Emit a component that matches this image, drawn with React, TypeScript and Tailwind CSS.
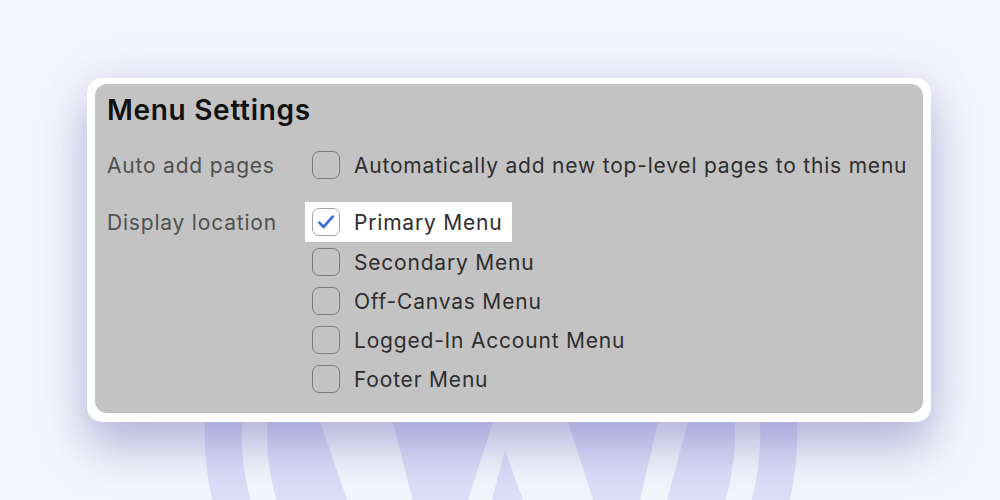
import React from 'react';

const locations = [
  { id: 'primary', label: 'Primary Menu', checked: true },
  { id: 'secondary', label: 'Secondary Menu', checked: false },
  { id: 'off-canvas', label: 'Off-Canvas Menu', checked: false },
  { id: 'logged-in', label: 'Logged-In Account Menu', checked: false },
  { id: 'footer', label: 'Footer Menu', checked: false },
];

function Checkbox({ checked }: { checked?: boolean }) {
  if (checked) {
    return (
      <span className="w-[28px] h-[28px] shrink-0 rounded-[7px] border-[1.5px] border-[#a3a3a3] bg-white flex items-center justify-center">
        <svg viewBox="0 0 24 24" className="w-[20px] h-[20px]" fill="none">
          <path d="M4 12.8l5 5.2L20 5.5" stroke="#3b6fd6" strokeWidth="3.3" strokeLinecap="round" strokeLinejoin="round" />
        </svg>
      </span>
    );
  }
  return <span className="w-[28px] h-[28px] shrink-0 rounded-[7px] border-[1.5px] border-[#7c7c7c]" />;
}

// faint WordPress mark behind the card
function WordPressMark() {
  return (
    <svg viewBox="0 0 1000 500" className="absolute inset-0 w-[1000px] h-[500px]">
      <circle cx="501" cy="434" r="277.75" fill="none" stroke="#dedcf8" strokeWidth="37" />
      <circle cx="501" cy="434" r="234" fill="#dedcf8" />
      <polygon points="305.5,380 382,380 423,540 361,540" fill="#f5f5fc" />
      <polygon points="506.5,380 554.5,380 606,540 537.4,540 505,450 481.6,540 455,540" fill="#f5f5fc" />
      <polygon points="667.7,380 699.3,380 656.2,540 630.8,540" fill="#f5f5fc" />
    </svg>
  );
}

export default function App() {
  return (
    <div
      className="relative w-[1000px] h-[500px] overflow-hidden bg-[#f5f5fc] pt-[78px] pl-[87px]"
      style={{ fontFamily: 'Inter, "Noto Sans", sans-serif' }}
    >
      <WordPressMark />

      <div className="relative w-[844px] h-[344px] bg-white rounded-[15px] pt-[6px] px-[8px] pb-[9px] shadow-[0_26px_46px_rgba(85,90,170,0.36),0_0_44px_rgba(130,130,210,0.16)]">
        <div className="h-full bg-[#c3c3c3] rounded-[12px] pl-[12px] pt-[10px]">
          <h1 className="text-[28px] leading-[32px] font-semibold text-[#111] tracking-[0.7px]">Menu Settings</h1>

          <div className="grid grid-cols-[205px_1fr] mt-[25px] text-[21px] tracking-[0.8px]">
            <div className="h-[28px] pt-[2px] flex items-center text-[#505050]">Auto add pages</div>
            <div className="h-[28px] flex items-center gap-[14px] text-[#2e2e2e]">
              <Checkbox />
              <span className="pt-[2px]">Automatically add new top-level pages to this menu</span>
            </div>

            <div className="h-10 mt-[23px] pt-[2px] flex items-center text-[#505050]">Display location</div>
            <div className="mt-[23px] flex flex-col">
              {locations.map(loc => (
                <div
                  key={loc.id}
                  className={
                    loc.checked
                      ? 'h-10 -ml-[7px] pl-[7px] pr-[9px] bg-white w-fit flex items-center gap-[14px] text-[#2e2e2e]'
                      : 'h-[39px] flex items-center gap-[14px] text-[#2e2e2e]'
                  }
                >
                  <Checkbox checked={loc.checked} />
                  <span className="pt-[2px]">{loc.label}</span>
                </div>
              ))}
            </div>
          </div>
        </div>
      </div>
    </div>
  );
}
